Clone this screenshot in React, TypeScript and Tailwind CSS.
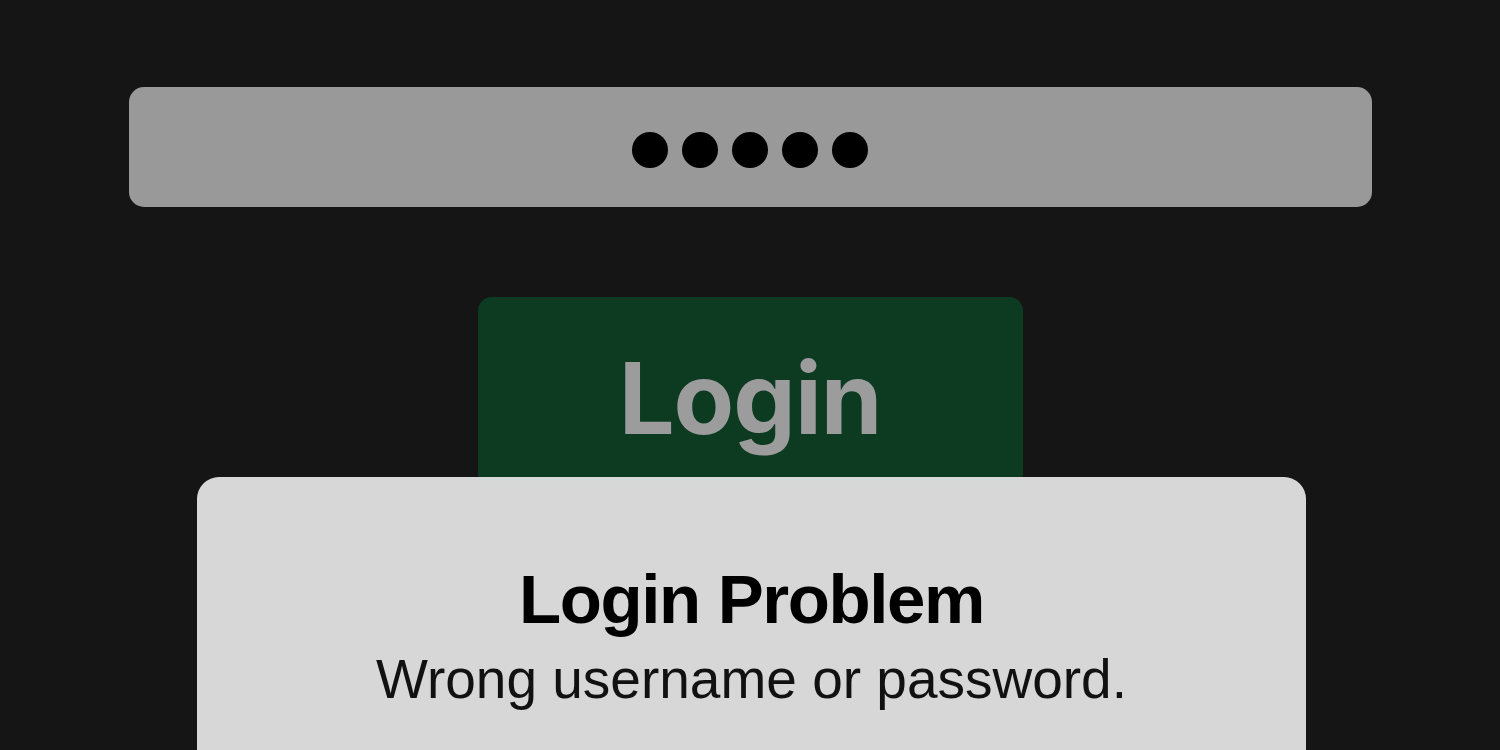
export default function App() {
  return (
    <div className="relative h-[750px] w-[1500px] overflow-hidden bg-[#151515]">
      {/* Password field */}
      <div className="flex flex-col items-center pt-[87px]">
        <div className="flex h-[120px] w-[1243px] items-center justify-center gap-[14px] rounded-[15px] bg-[#999999] pt-[6px]">
          {[0, 1, 2, 3, 4].map((i) => (
            <div key={i} className="h-9 w-9 rounded-full bg-black" />
          ))}
        </div>

        {/* Login button */}
        <div className="mt-[90px] flex h-[190px] w-[545px] justify-center rounded-[14px] bg-[#0c3b22] pt-[52px]">
          <span
            className="text-[99px] font-bold leading-none tracking-[-1px] text-[#9c9c9c]"
            style={{ fontFamily: "Inter, Lato, sans-serif" }}
          >
            Login
          </span>
        </div>
      </div>

      {/* Alert */}
      <div className="absolute left-[197px] top-[477px] flex h-[400px] w-[1109px] flex-col items-center rounded-[22px] bg-[#e0e1e0]/95 pt-[88px] backdrop-blur-xl">
        <h2
          className="text-[69px] font-bold leading-none tracking-[-1.4px] text-black"
          style={{ fontFamily: "'Liberation Sans', Arial, sans-serif" }}
        >
          Login Problem
        </h2>
        <p
          className="mt-[18px] text-[55px] leading-none text-[#111111]"
          style={{ fontFamily: "'Liberation Sans', Arial, sans-serif" }}
        >
          Wrong username or password.
        </p>
      </div>
    </div>
  );
}
